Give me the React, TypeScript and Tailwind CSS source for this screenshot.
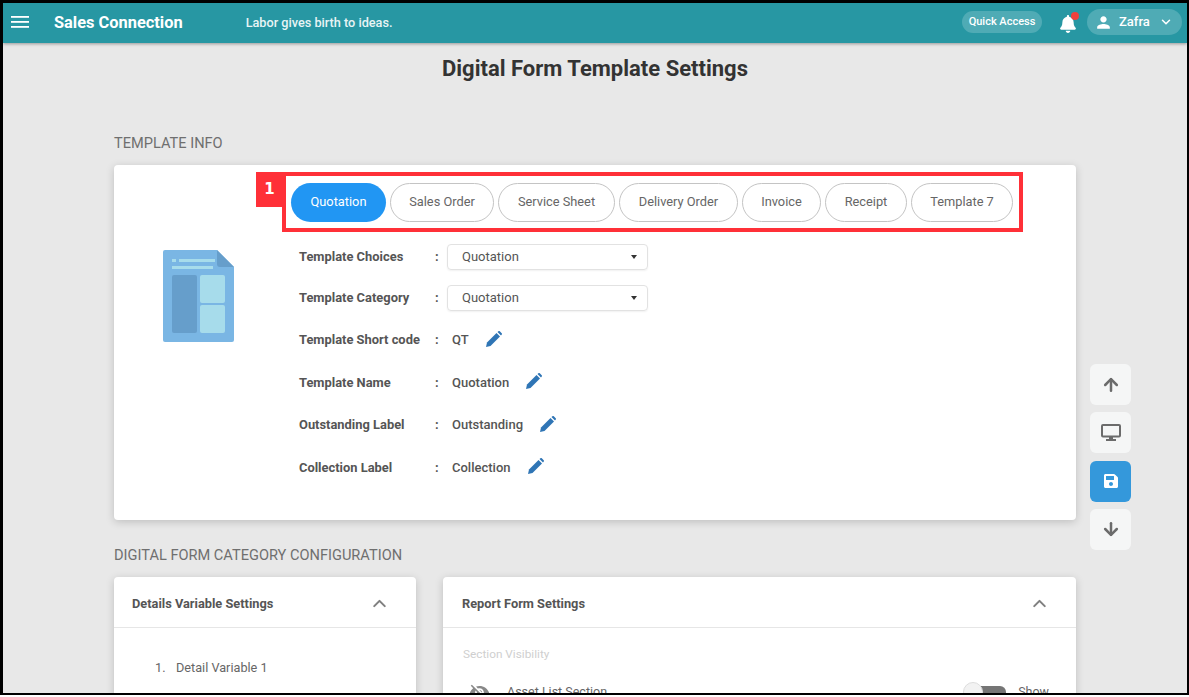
import { ArrowDown, ArrowUp, ChevronDown, ChevronUp } from "lucide-react";
import { FaBell, FaSave } from "react-icons/fa";
import { MdPerson, MdVisibilityOff } from "react-icons/md";

const tabs = [
  { name: "Quotation", width: "w-[95px]" },
  { name: "Sales Order", width: "w-[104px]" },
  { name: "Service Sheet", width: "w-[117px]" },
  { name: "Delivery Order", width: "w-[119px]" },
  { name: "Invoice", width: "w-[79px]" },
  { name: "Receipt", width: "w-[82px]" },
  { name: "Template 7", width: "w-[102px]" },
];

const selectRows = ["Template Choices", "Template Category"];

const editRows = [
  { label: "Template Short code", value: "QT" },
  { label: "Template Name", value: "Quotation" },
  { label: "Outstanding Label", value: "Outstanding" },
  { label: "Collection Label", value: "Collection" },
];

const EditIcon = () => (
  <svg width="16" height="16" viewBox="0 0 16 16" className="mb-[3px] ml-[17px] text-[#2f75b5]" fill="currentColor">
    <path d="M0 16L1 11.5L10.5 2L14 5.5L4.5 15Z" />
    <path d="M11.5 1L12.4 .3a1 1 0 0 1 1.4 0L15.7 2.2a1 1 0 0 1 0 1.4L15 4.5Z" />
  </svg>
);

const SideButton = ({ active, children }: { active?: boolean; children: React.ReactNode }) => (
  <div
    className={
      "flex h-[41px] w-[41px] items-center justify-center rounded-md " +
      (active ? "bg-[#3498db] text-white" : "bg-[#f5f6f6] text-[#6b6b6b]")
    }
  >
    {children}
  </div>
);

export default function App() {
  return (
    <div className="h-[697px] w-[1189px] overflow-hidden bg-white font-['Roboto',sans-serif]">
      <div className="flex h-[695px] flex-col overflow-hidden border-x-[3px] border-t-[3px] border-b-[2px] border-r-[2px] border-black bg-[#e8e8e8]">
        {/* top bar */}
        <header className="flex h-[40px] shrink-0 items-center bg-[#2797a3] text-white shadow-[0_1px_3px_rgba(0,0,0,0.35)]">
          <svg width="18" height="12" viewBox="0 0 18 12" className="mb-[2px] ml-[8px]" fill="currentColor">
            <rect y="0" width="18" height="1.8" />
            <rect y="5" width="18" height="1.8" />
            <rect y="10" width="18" height="1.8" />
          </svg>
          <span className="ml-[25px] text-[16.4px] font-bold">Sales Connection</span>
          <span className="ml-[63px] text-[12.7px] font-medium text-[#e8f4f5]">Labor gives birth to ideas.</span>
          <div className="mb-[2px] ml-auto flex items-center">
            <span className="flex h-[22px] w-[80px] items-center justify-center rounded-full bg-[#4fabb5] text-[11px] font-medium">
              Quick Access
            </span>
            <span className="relative ml-[17px] mt-[4px]">
              <FaBell className="h-[18px] w-[18px]" />
              <span className="absolute -right-[2px] -top-[3px] h-[8px] w-[8px] rounded-full bg-[#f0403c]" />
            </span>
            <span className="ml-[10px] mr-[5px] flex h-[26px] w-[95px] items-center rounded-full bg-[#4fabb5] pl-[7px] text-[13px] font-medium">
              <MdPerson className="h-[19px] w-[19px]" />
              <span className="ml-[6px]">Zafra</span>
              <ChevronDown className="ml-[9px] h-[14px] w-[14px]" strokeWidth={2.6} />
            </span>
          </div>
        </header>

        <main className="relative flex-1 overflow-hidden">
          <h1 className="mt-[12px] text-center text-[22px] leading-[28px] font-bold text-[#333333]">
            Digital Form Template Settings
          </h1>

          <div className="ml-[111px] w-[962px]">
            <h2 className="mt-[50px] text-[14.6px] leading-[20px] text-[#6f6f6f]">TEMPLATE INFO</h2>

            {/* template info card */}
            <section className="relative mt-[12px] h-[355px] rounded-sm bg-white shadow-[0_2px_8px_rgba(0,0,0,0.18)]">
              <div className="flex gap-[4px] pl-[177px] pt-[18px]">
                {tabs.map((tab, i) => (
                  <div
                    key={tab.name}
                    className={
                      "flex h-[39px] items-center justify-center rounded-full pb-[1px] text-[12.8px] " +
                      tab.width +
                      (i === 0 ? " bg-[#2196f3] text-white" : " border border-[#c4c4c4] text-[#666666]")
                    }
                  >
                    {tab.name}
                  </div>
                ))}
              </div>

              {/* annotation */}
              <div className="absolute left-[168px] top-[7px] h-[60px] w-[741px] border-[4px] border-[#ff3038]" />
              <div className="absolute left-[142px] top-[7px] flex h-[35px] w-[27px] items-center justify-center bg-[#ff3038] font-['DejaVu_Sans',sans-serif] text-[15px] font-bold text-white">
                1
              </div>

              <div className="flex pl-[49px] pt-[22px]">
                <svg width="71" height="93" viewBox="0 0 71 93" className="mt-[6px] shrink-0">
                  <path d="M2 0H54L71 17V90a2 2 0 0 1-2 2H2a2 2 0 0 1-2-2V2a2 2 0 0 1 2-2z" fill="#7ab6e4" />
                  <path d="M54 0L71 17H57a3 3 0 0 1-3-3z" fill="#669ecb" />
                  <rect x="9" y="9" width="4" height="3" fill="#a7dceb" />
                  <rect x="16" y="9" width="36" height="3" fill="#a7dceb" />
                  <rect x="9" y="16" width="41" height="3" fill="#a7dceb" />
                  <rect x="9" y="25" width="25" height="58" rx="2" fill="#669ecb" />
                  <rect x="37" y="25" width="25" height="28" rx="2" fill="#a7dceb" />
                  <rect x="37" y="55" width="25" height="28" rx="2" fill="#a7dceb" />
                </svg>

                <div className="ml-[65px] text-[12.9px] text-[#555555]">
                  <div className="mb-[19px] flex flex-col gap-[15px]">
                    {selectRows.map((label) => (
                      <div key={label} className="flex h-[26px] items-center">
                        <span className="w-[136px] font-bold">{label}</span>
                        <span className="w-[12px] font-bold">:</span>
                        <span className="flex h-[26px] w-[201px] items-center justify-between rounded-sm border border-[#e2e2e2] pl-[14px] pr-[10px] text-[13px] shadow-[0_1px_2px_rgba(0,0,0,0.06)]">
                          Quotation
                          <span className="h-0 w-0 border-x-[3.5px] border-t-[4px] border-x-transparent border-t-[#333333]" />
                        </span>
                      </div>
                    ))}
                  </div>
                  {editRows.map((row) => (
                    <div key={row.label} className="mb-[22.5px] flex h-[20px] items-center">
                      <span className="w-[136px] font-bold">{row.label}</span>
                      <span className="w-[17px] font-bold">:</span>
                      <span className="text-[13px] font-medium">{row.value}</span>
                      <EditIcon />
                    </div>
                  ))}
                </div>
              </div>
            </section>

            <h2 className="mt-[25px] text-[14.6px] leading-[20px] text-[#6f6f6f]">DIGITAL FORM CATEGORY CONFIGURATION</h2>

            <div className="mt-[12px] flex gap-[27px]">
              <section className="h-[200px] w-[302px] shrink-0 rounded-sm bg-white shadow-[0_2px_8px_rgba(0,0,0,0.18)]">
                <div className="flex h-[51px] items-center justify-between border-b border-[#e6e6e6] pl-[18px] pr-[26px] pt-[3px]">
                  <span className="text-[12.8px] font-bold text-[#555555]">Details Variable Settings</span>
                  <ChevronUp className="h-[21px] w-[21px] text-[#808080]" strokeWidth={2.4} />
                </div>
                <div className="mt-[30px] flex pl-[41px] text-[12.7px] text-[#666666]">
                  <span className="w-[21px]">1.</span>
                  <span>Detail Variable 1</span>
                </div>
              </section>

              <section className="h-[200px] flex-1 rounded-sm bg-white shadow-[0_2px_8px_rgba(0,0,0,0.18)]">
                <div className="flex h-[51px] items-center justify-between border-b border-[#e6e6e6] pl-[19px] pr-[26px] pt-[3px]">
                  <span className="text-[12.8px] font-bold text-[#555555]">Report Form Settings</span>
                  <ChevronUp className="h-[21px] w-[21px] text-[#808080]" strokeWidth={2.4} />
                </div>
                <div className="pl-[20px] pr-[27px]">
                  <div className="mt-[18px] text-[11.8px] text-[#cfcfcf]">Section Visibility</div>
                  <div className="mt-[18px] flex items-center text-[12.5px] text-[#666666]">
                    <MdVisibilityOff className="ml-[6px] h-[21px] w-[21px] text-[#888888]" />
                    <span className="ml-[17px]">Asset List Section</span>
                    <span className="relative ml-auto h-[12px] w-[36px] rounded-full bg-[#757575]">
                      <span className="absolute -left-[7px] -top-[4px] h-[20px] w-[20px] rounded-full border border-[#dddddd] bg-[#f2f2f2]" />
                    </span>
                    <span className="ml-[12px]">Show</span>
                  </div>
                </div>
              </section>
            </div>
          </div>

          {/* floating scroll and save buttons */}
          <div className="absolute left-[1087px] top-[321px] flex flex-col gap-[7.3px]">
            <SideButton>
              <ArrowUp className="h-[20px] w-[20px]" strokeWidth={3} />
            </SideButton>
            <SideButton>
              <svg width="20" height="17" viewBox="0 0 20 17" fill="currentColor">
                <rect x="1" y="1" width="18" height="11.5" rx="1" fill="none" stroke="currentColor" strokeWidth="2" />
                <rect x="8" y="13" width="4" height="2" />
                <rect x="5" y="15" width="10" height="2" />
              </svg>
            </SideButton>
            <SideButton active>
              <FaSave className="h-[16px] w-[16px]" />
            </SideButton>
            <SideButton>
              <ArrowDown className="h-[20px] w-[20px]" strokeWidth={3} />
            </SideButton>
          </div>
        </main>
      </div>
    </div>
  );
}
